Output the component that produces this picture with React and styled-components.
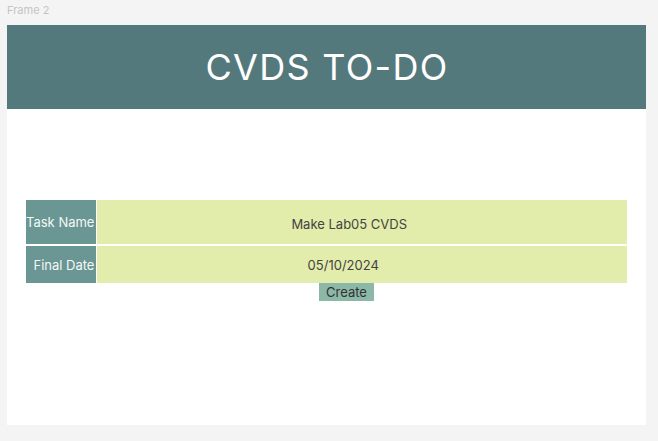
import React from 'react';
import styled, { createGlobalStyle } from 'styled-components';

const GlobalStyle = createGlobalStyle`
  html, body {
    margin: 0;
    padding: 0;
    background: #f4f4f4;
    font-family: Inter, "Noto Sans", sans-serif;
  }
`;

export default function App() {
  return (
    <Canvas>
      <GlobalStyle />
      <FrameLabel>Frame 2</FrameLabel>
      <Frame>
        <Header>
          <Title>CVDS TO-DO</Title>
        </Header>
        <Body>
          <TaskTable>
            <tbody>
              <tr>
                <LabelCell $height={44}>Task Name</LabelCell>
                <ValueCell $top={4} $right={26}>Make Lab05 CVDS</ValueCell>
              </tr>
              <tr>
                <LabelCell $height={37}>Final Date</LabelCell>
                <ValueCell $right={38}>05/10/2024</ValueCell>
              </tr>
            </tbody>
          </TaskTable>
          <ButtonRow>
            <CreateButton>Create</CreateButton>
          </ButtonRow>
        </Body>
      </Frame>
    </Canvas>
  );
}

const Canvas = styled.div`
  width: 658px;
  height: 441px;
  padding: 0 12px 0 7px;
  box-sizing: border-box;
  background: #f4f4f4;
`;

const FrameLabel = styled.div`
  height: 25px;
  line-height: 20px;
  font-size: 11px;
  color: #c4c4c4;
`;

const Frame = styled.div`
  width: 639px;
  height: 400px;
  background: #ffffff;
  display: flex;
  flex-direction: column;
`;

const Header = styled.div`
  height: 84px;
  background: #54797c;
  display: flex;
  align-items: center;
  justify-content: center;
`;

const Title = styled.h1`
  margin: 0 0 0 1px;
  font-size: 36px;
  font-weight: 400;
  color: #ffffff;
  letter-spacing: 1.3px;
`;

const Body = styled.div`
  padding: 89px 19px 0;
`;

const TaskTable = styled.table`
  width: 603px;
  border-collapse: separate;
  border-spacing: 1px 2px;
  margin: 0 -1px;
`;

const LabelCell = styled.td`
  width: 70px;
  height: ${p => p.$height}px;
  padding: 0;
  background: #6a9693;
  color: #f4f8f7;
  font-size: 13px;
  text-align: right;
  padding-right: 2px;
  box-sizing: border-box;
  white-space: nowrap;
`;

const ValueCell = styled.td`
  padding: ${p => p.$top || 0}px ${p => p.$right || 0}px 0 0;
  background: #e2ecab;
  color: #444444;
  font-size: 13px;
  text-align: center;
`;

const ButtonRow = styled.div`
  display: flex;
  justify-content: center;
  padding-left: 40px;
  margin-top: -2px;
`;

const CreateButton = styled.button`
  width: 55px;
  height: 18px;
  padding: 0;
  border: none;
  background: #8bb8a7;
  color: #333333;
  font-family: Inter, "Noto Sans", sans-serif;
  font-size: 13px;
  line-height: 18px;
`;
